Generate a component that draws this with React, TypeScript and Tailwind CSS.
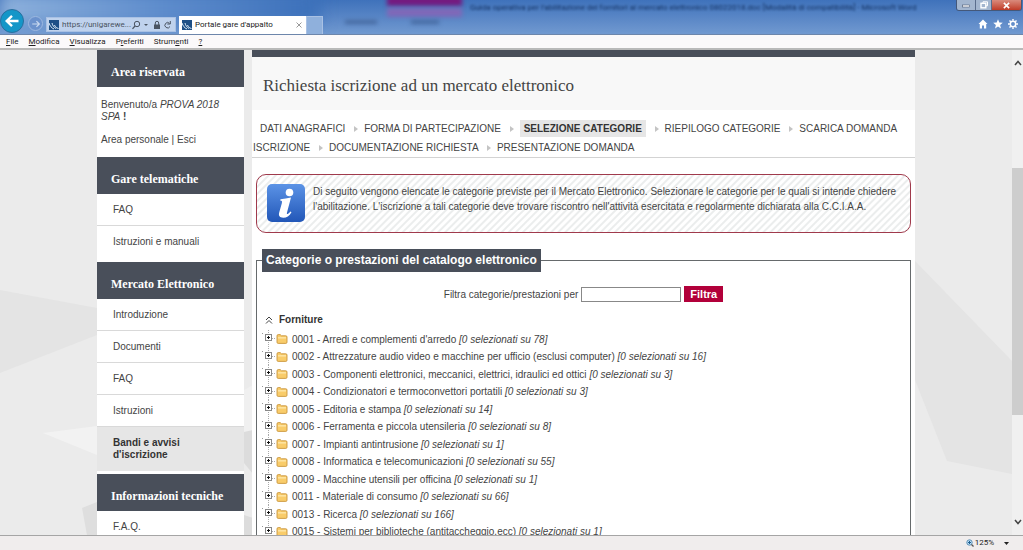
import React from "react";

const menuItems = [
  { before: "", key: "F", after: "ile" },
  { before: "", key: "M", after: "odifica" },
  { before: "", key: "V", after: "isualizza" },
  { before: "P", key: "r", after: "eferiti" },
  { before: "Strum", key: "e", after: "nti" },
  { before: "", key: "?", after: "" },
];

const steps = [
  { label: "DATI ANAGRAFICI" },
  { label: "FORMA DI PARTECIPAZIONE" },
  { label: "SELEZIONE CATEGORIE", active: true },
  { label: "RIEPILOGO CATEGORIE" },
  { label: "SCARICA DOMANDA ISCRIZIONE" },
  { label: "DOCUMENTAZIONE RICHIESTA" },
  { label: "PRESENTAZIONE DOMANDA" },
];

const categories = [
  { code: "0001", name: "Arredi e complementi d'arredo", total: 78 },
  { code: "0002", name: "Attrezzature audio video e macchine per ufficio (esclusi computer)", total: 16 },
  { code: "0003", name: "Componenti elettronici, meccanici, elettrici, idraulici ed ottici", total: 3 },
  { code: "0004", name: "Condizionatori e termoconvettori portatili", total: 3 },
  { code: "0005", name: "Editoria e stampa", total: 14 },
  { code: "0006", name: "Ferramenta e piccola utensileria", total: 8 },
  { code: "0007", name: "Impianti antintrusione", total: 1 },
  { code: "0008", name: "Informatica e telecomunicazioni", total: 55 },
  { code: "0009", name: "Macchine utensili per officina", total: 1 },
  { code: "0011", name: "Materiale di consumo", total: 66 },
  { code: "0013", name: "Ricerca", total: 166 },
  { code: "0015", name: "Sistemi per biblioteche (antitaccheggio,ecc)", total: 1 },
];

const SiteIcon = () => (
  <svg viewBox="0 0 10 10" className="h-[10px] w-[10px] shrink-0">
    <rect width="10" height="10" fill="#1d4f86" />
    <path d="M0 3c1 3 2.500 5 5 6M3 3c.5 2.500 2 4.500 4 5.500M5.500 5c.5 1.500 1.500 3 4 3.500" stroke="#dcecf8" strokeWidth="1" fill="none" />
  </svg>
);

const BrowserBar = () => (
  <header className="relative flex h-[35px] shrink-0 overflow-hidden border-b border-[#6d86ab] bg-gradient-to-b from-[#3f72bb] to-[#7199d0]">
    <div aria-hidden="true" className="absolute inset-0">
      <div className="absolute -top-2 left-0 h-8 w-80 bg-gradient-to-r from-[#8fb2dc] via-[#5f8dcc] to-[#3a6fb9] blur-sm" />
      <div className="absolute -top-1 left-[387px] h-[10px] w-[75px] bg-[#741a80] blur-[2px]" />
      <div className="absolute top-2 left-[387px] h-[9px] w-[75px] bg-[#7f68b8] blur-[2px]" />
      <div className="absolute top-5 left-[345px] h-[4px] w-8 bg-[#45689f] blur-[2px]" />
      <div className="absolute top-5 left-[411px] h-[4px] w-7 bg-[#45689f] blur-[2px]" />
      <p className="absolute top-0 left-[470px] font-['Roboto',sans-serif] text-[8px] leading-4 whitespace-nowrap text-[#12305f] blur-[1px]">
        Guida operativa per l'abilitazione dei fornitori al mercato elettronico 08022018.doc [Modalità di compatibilità] - Microsoft Word
      </p>
    </div>

    <div className="relative flex flex-1 items-end">
      <button aria-label="Indietro" className="mb-px flex h-6 w-6 items-center justify-center rounded-full border border-[#2a6f9f] bg-[#1496c8]">
        <svg viewBox="0 0 16 16" className="h-4 w-4">
          <path d="M14.500 8H3M8 2.800L2.700 8L8 13.200" stroke="#fff" strokeWidth="2.400" fill="none" />
        </svg>
      </button>
      <button aria-label="Avanti" className="mb-[3px] ml-1 flex h-[15px] w-[15px] items-center justify-center rounded-full border border-[#9cb8e0] bg-[#6b92cd]">
        <svg viewBox="0 0 12 12" className="h-[10px] w-[10px]">
          <path d="M1.500 6H10M6.500 2.500L10 6L6.500 9.500" stroke="#c9d9f0" strokeWidth="1.400" fill="none" />
        </svg>
      </button>
      <div className="mb-[2px] ml-[3px] flex h-[15px] w-[130px] items-center border border-[#a9c1e4] bg-[#bfd2ed] px-[2px] text-[#4a5462]">
        <SiteIcon />
        <input
          aria-label="Indirizzo"
          readOnly
          value="https://unigarewe..."
          className="ml-[3px] w-0 flex-1 bg-transparent font-['Roboto',sans-serif] text-[8px] leading-3 outline-none"
        />
        <svg viewBox="0 0 42 10" className="h-[10px] w-[42px] shrink-0" fill="none" stroke="currentColor">
          <circle cx="6" cy="4" r="2.700" />
          <path d="M4 6L1.500 8.800" strokeWidth="1.200" />
          <path d="M13 4h4l-2 2z" fill="currentColor" stroke="none" />
          <rect x="23" y="4.500" width="6" height="4.500" fill="currentColor" stroke="none" />
          <path d="M24.300 5V3a1.700 1.700 0 0 1 3.400 0v2" />
          <path d="M38.500 3.300A2.700 2.700 0 1 0 39 6.500M39.300 1v3h-3" />
        </svg>
      </div>
      <div className="ml-[3px] flex h-[18px] w-[127px] items-center bg-white pr-1 pl-[3px]">
        <SiteIcon />
        <span className="ml-[3px] flex-1 font-['Roboto',sans-serif] text-[8px] leading-3 whitespace-nowrap text-[#222]">Portale gare d'appalto</span>
        <button aria-label="Chiudi scheda" className="h-[6px] w-[6px]">
          <svg viewBox="0 0 6 6" className="h-[6px] w-[6px]">
            <path d="M.5 .5l5 5M5.500 .5l-5 5" stroke="#999" />
          </svg>
        </button>
      </div>
      <button aria-label="Nuova scheda" className="h-[18px] w-[17px] border border-b-0 border-[#a9c1e4] bg-[#8fb0dc]" />
    </div>

    <div className="relative flex flex-col items-end">
      <div className="mr-px flex h-[11px] overflow-hidden rounded-b-[3px] border border-t-0 border-[#44587a]">
        <button aria-label="Riduci a icona" className="flex w-[18px] items-center justify-center bg-[#a3b6cf]">
          <svg viewBox="0 0 10 8" className="h-2 w-[10px]">
            <rect x="1.500" y="4" width="7" height="2" fill="#fff" stroke="#4a5870" strokeWidth=".6" />
          </svg>
        </button>
        <button aria-label="Ripristina" className="flex w-[17px] items-center justify-center border-x border-[#5a6d8c] bg-[#a3b6cf]">
          <svg viewBox="0 0 10 8" className="h-2 w-[10px]" fill="none">
            <path d="M4 2V.8h4.500v4H7" stroke="#fff" />
            <rect x="2" y="2.300" width="4.800" height="4.500" stroke="#fff" strokeWidth="1.400" />
          </svg>
        </button>
        <button aria-label="Chiudi" className="flex w-[29px] items-center justify-center bg-gradient-to-b from-[#d98a7c] to-[#bf3a27]">
          <svg viewBox="0 0 8 8" className="h-[7px] w-[7px]">
            <path d="M1 1l6 6M7 1l-6 6" stroke="#fff" strokeWidth="1.800" />
          </svg>
        </button>
      </div>
      <div className="mt-2 mr-[5px] flex gap-[5px]">
        <button aria-label="Home">
          <svg viewBox="0 0 10 10" className="h-[10px] w-[10px]">
            <path d="M5 .5L.5 5h1.300v4.500h2.200V6.500h2v3h2.200V5h1.300z" fill="#fff" />
          </svg>
        </button>
        <button aria-label="Preferiti">
          <svg viewBox="0 0 10 10" className="h-[10px] w-[10px]">
            <path d="M5 .3l1.300 3.300 3.500.2-2.700 2.200.9 3.500L5 7.600 2 9.500l.9-3.500L.2 3.800l3.500-.2z" fill="#fff" />
          </svg>
        </button>
        <button aria-label="Strumenti">
          <svg viewBox="0 0 10 10" className="h-[10px] w-[10px]">
            <circle cx="5" cy="5" r="2.700" stroke="#fff" strokeWidth="1.500" fill="none" />
            <path d="M5 0v1.800M5 8.200V10M0 5h1.800M8.200 5H10M1.500 1.500l1.200 1.200M7.300 7.300l1.200 1.200M8.500 1.500L7.300 2.700M2.700 7.300L1.500 8.500" stroke="#fff" strokeWidth="1.400" />
          </svg>
        </button>
      </div>
    </div>
  </header>
);

const MenuBar = () => (
  <nav className="flex h-[15px] shrink-0 items-center gap-[10px] border-b-2 border-[#b9b9b9] bg-[#fbf9fa] pl-[6px] font-['Roboto',sans-serif] text-[8px] leading-3 text-[#222]">
    {menuItems.map((item) => (
      <button key={item.key}>
        {item.before}
        <span className="underline">{item.key}</span>
        {item.after}
      </button>
    ))}
  </nav>
);

// Faceted grey shapes behind the page columns
const Backdrop = () => (
  <svg viewBox="0 0 1023 485" preserveAspectRatio="none" className="absolute inset-0 h-full w-full">
    <path d="M0 240L97 258V285L0 323z" fill="#e4e4e4" />
    <path d="M43 383L97 376V405z" fill="#f2f2f2" />
    <path d="M82 458L97 452V485H87z" fill="#dedede" />
    <path d="M244 340L253 335V382H244z" fill="#f0f0f0" />
    <path d="M244 382L253 380V424L244 413z" fill="#dcdcdc" />
    <path d="M244 465L253 468V485H244z" fill="#dcdcdc" />
    <path d="M915 211L1012 311V424L947 411L915 330z" fill="#e4e4e4" />
  </svg>
);

const SideTitle = ({ children }: { children: React.ReactNode }) => (
  <h2 className="h-[37px] bg-[#494f5a] pt-[14px] pl-[14px] font-['Liberation_Serif',serif] text-[12px] leading-4 font-bold text-white">
    {children}
  </h2>
);

const SideLink = ({ children, last }: { children: React.ReactNode; last?: boolean }) => (
  <li className={last ? "h-8" : "h-8 border-b border-[#d9d9d9]"}>
    <a href="#" className="block pl-4 leading-8">{children}</a>
  </li>
);

const Sidebar = () => (
  <aside className="w-[147px] shrink-0 bg-white">
    <SideTitle>Area riservata</SideTitle>
    <div className="px-1 pt-3 pb-[11px] leading-3">
      <p>
        Benvenuto/a <em>PROVA 2018 SPA</em> <strong>!</strong>
      </p>
      <p className="mt-[11px]">
        <a href="#">Area personale</a> | <a href="#">Esci</a>
      </p>
    </div>
    <SideTitle>Gare telematiche</SideTitle>
    <ul className="pb-1">
      <SideLink>FAQ</SideLink>
      <SideLink last>Istruzioni e manuali</SideLink>
    </ul>
    <SideTitle>Mercato Elettronico</SideTitle>
    <ul className="pb-[3px]">
      <SideLink>Introduzione</SideLink>
      <SideLink>Documenti</SideLink>
      <SideLink>FAQ</SideLink>
      <SideLink>Istruzioni</SideLink>
      <li className="bg-[#e6e6e6] py-[10px] pr-12 pl-4 leading-3 font-bold text-[#333]">
        <a href="#">Bandi e avvisi d'iscrizione</a>
      </li>
    </ul>
    <SideTitle>Informazioni tecniche</SideTitle>
    <ul>
      <SideLink>F.A.Q.</SideLink>
    </ul>
  </aside>
);

const InfoIcon = () => (
  <svg viewBox="0 0 38 38" className="h-[38px] w-[38px] shrink-0">
    <defs>
      <linearGradient id="info" x1="0" y1="0" x2="0" y2="1">
        <stop offset="0" stopColor="#5b93e6" />
        <stop offset="1" stopColor="#2257b8" />
      </linearGradient>
    </defs>
    <rect width="38" height="38" rx="5" fill="url(#info)" />
    <circle cx="22.500" cy="8.500" r="3.800" fill="#fff" />
    <path d="M13.500 15.300c3.500-.3 6.800-1 10.500-1.800L20 28.500c-.4 1.500.2 1.900 1.100 1.300.9-.6 1.600-1.400 2.300-2.400l1.100.8c-2 3.700-4.900 5.600-8.200 5.600-3.600 0-5-2-4.100-5.200l2.700-9.700c.4-1.600-.1-2.200-1.700-2.300z" fill="#fff" />
  </svg>
);

const TreeToggle = () => (
  <button aria-label="Espandi" className="flex h-full w-[14px] shrink-0 items-center">
    <svg viewBox="0 0 14 18" className="h-[18px] w-[14px]" fill="none">
      <path d="M6.500 0v18M10 8.500h4" stroke="#aaa" strokeDasharray="1 1" />
      <path d="M0 3.500h1" stroke="#999" />
      <rect x="3.500" y="4.500" width="6" height="6" fill="#fff" stroke="#888" />
      <path d="M5 7.500h3M6.500 6v3" stroke="#111" />
    </svg>
  </button>
);

const Folder = () => (
  <svg viewBox="0 0 12 10" className="h-[10px] w-3 shrink-0">
    <path d="M1 2Q1 .6 2.200 .6h2l1.300 1.200H9.800q1.200 0 1.200 1.200V8.200q0 1.200-1.200 1.200H2.200q-1.200 0-1.200-1.200z" fill="#f9cc6a" stroke="#c9963e" strokeWidth=".9" />
    <path d="M2 3.800h8" stroke="#fde3a0" strokeWidth="1.600" />
  </svg>
);

const Steps = () => (
  <nav className="border-b border-[#d3d3d3] pt-[9px] pl-px text-[10px] leading-[19px]">
    <span className="pl-[7px]" />
    {steps.map((step, index) => (
      <React.Fragment key={step.label}>
        {index > 0 && (
          <svg viewBox="0 0 4 6" className="mx-[6px] inline h-[6px] w-1 align-baseline">
            <path d="M0 0l4 3-4 3z" fill="#c4c4c4" />
          </svg>
        )}
        {step.active ? (
          <strong className="bg-[#e6e6e6] px-1 py-[3px] text-[#333]">{step.label}</strong>
        ) : (
          <a href="#">{step.label}</a>
        )}{" "}
      </React.Fragment>
    ))}
  </nav>
);

const Content = () => (
  <main className="min-w-0 flex-1 bg-white">
    <div className="border-t-[7px] border-[#494f5a] bg-[#f8f8f8] pt-[18px] pb-[14px] pl-[11px]">
      <h1 className="font-['Liberation_Serif',serif] text-[17px] leading-[21px] text-[#444]">
        Richiesta iscrizione ad un mercato elettronico
      </h1>
    </div>
    <Steps />

    <section className="mx-1 mt-4 flex gap-2 rounded-[10px] border border-[#a03a4c] bg-[repeating-linear-gradient(135deg,#fff_0px,#fff_2px,#ebeded_3px,#ebeded_4px,#fff_5px)] px-[10px] pt-[9px] pb-[10px]">
      <InfoIcon />
      <p className="leading-[15px]">
        Di seguito vengono elencate le categorie previste per il Mercato Elettronico. Selezionare le categorie per le quali si intende chiedere l'abilitazione. L'iscrizione a tali categorie deve trovare riscontro nell'attività esercitata e regolarmente dichiarata alla C.C.I.A.A.
      </p>
    </section>

    <fieldset className="mx-1 mt-4 border border-[#666a6c] px-[5px]">
      <legend className="bg-[#494f5a] px-1 text-[12px] leading-[23px] font-bold text-white">
        Categorie o prestazioni del catalogo elettronico
      </legend>
      <form className="mt-[14px] flex items-center justify-center gap-[3px]" onSubmit={(e) => e.preventDefault()}>
        <label htmlFor="filter">Filtra categorie/prestazioni per</label>
        <input id="filter" type="text" className="h-[15px] w-[100px] border border-[#888] bg-white px-1 outline-none" />
        <button className="bg-[#b2003a] px-[6px] text-[11px] leading-4 font-bold text-white">Filtra</button>
      </form>

      <h3 className="mt-[9px] flex items-center gap-[6px] pl-[3px] leading-[18px] font-bold text-[#333]">
        <svg viewBox="0 0 8 8" className="h-2 w-2" fill="none" stroke="#444">
          <path d="M1 4l3-3 3 3M1 7.500l3-3 3 3" />
        </svg>
        Forniture
      </h3>
      <ul className="mt-px">
        {categories.map((category) => (
          <li key={category.code} className="flex items-center odd:h-[18px] even:h-[17px]">
            <TreeToggle />
            <Folder />
            <span className="ml-1 whitespace-nowrap">
              {category.code} - {category.name} <em>[0 selezionati su {category.total}]</em>
            </span>
          </li>
        ))}
      </ul>
    </fieldset>
  </main>
);

const ScrollBar = () => (
  <div className="relative flex w-[11px] shrink-0 flex-col items-center bg-[#f0f0f0]">
    <svg viewBox="0 0 8 6" className="mt-[10px] h-[6px] w-2">
      <path d="M1 5l3-3.500L7 5" stroke="#444" strokeWidth="1.500" fill="none" />
    </svg>
    <div className="h-[21%]" />
    <div className="h-[51%] w-full bg-[#cdcdcd]" />
    <svg viewBox="0 0 8 6" className="mt-auto mb-[10px] h-[6px] w-2">
      <path d="M1 1l3 3.500L7 1" stroke="#444" strokeWidth="1.500" fill="none" />
    </svg>
  </div>
);

const StatusBar = () => (
  <footer className="flex h-[15px] shrink-0 items-center justify-end border-t border-[#a5a5a5] bg-[#f0eded] pr-[14px] font-['Roboto',sans-serif] text-[8px] leading-3 text-[#222]">
    <svg viewBox="0 0 8 8" className="h-2 w-2">
      <circle cx="3.500" cy="3.500" r="2.700" fill="#bfe0f5" stroke="#5c8fb5" />
      <path d="M2 3.500h3M3.500 2v3" stroke="#1e5f92" />
      <path d="M5.500 5.500L7.500 7.500" stroke="#555" strokeWidth="1.300" />
    </svg>
    <button className="ml-px flex items-center gap-[10px]">
      125%
      <svg viewBox="0 0 5 3" className="h-[3px] w-[5px]">
        <path d="M0 0h5L2.500 3z" fill="#222" />
      </svg>
    </button>
  </footer>
);

export default function App() {
  return (
    <div className="flex h-screen flex-col overflow-hidden font-['Liberation_Sans',sans-serif] text-[10px] text-[#444]">
      <BrowserBar />
      <MenuBar />
      <div className="relative flex min-h-0 flex-1 overflow-hidden bg-[#ebebeb]">
        <Backdrop />
        <div className="relative mx-auto flex w-full max-w-[818px] gap-2">
          <Sidebar />
          <Content />
        </div>
        <ScrollBar />
      </div>
      <StatusBar />
    </div>
  );
}
